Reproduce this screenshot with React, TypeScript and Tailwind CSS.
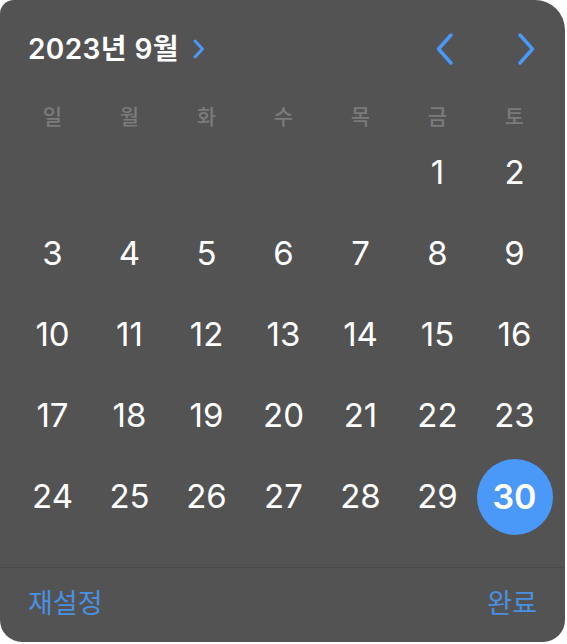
import React from "react";

const weekdays = ["일", "월", "화", "수", "목", "금", "토"];

export default function App() {
  const cells: (number | null)[] = [null, null, null, null, null];
  for (let i = 1; i <= 30; i++) cells.push(i);
  return (
    <div className="min-h-screen bg-white" style={{ fontFamily: "Inter, 'Noto Sans CJK KR', sans-serif" }}>
      <div className="w-[565px] h-[642px] bg-[#535353] rounded-tl-[14px] rounded-tr-[30px] rounded-b-[22px] overflow-hidden flex flex-col pt-[30px]">
        <div className="h-[38px] flex items-center pl-[28px] pr-[28px]">
          <span className="text-white text-[28px] font-semibold tracking-[0.4px]">2023년 9월</span>
          <svg className="ml-[13px]" width="14" height="20" viewBox="0 0 14 20">
            <path d="M3 2 L10.5 10 L3 18" fill="none" stroke="#4a98f7" strokeWidth="3" strokeLinecap="round" strokeLinejoin="round" />
          </svg>
          <div className="flex-1" />
          <svg width="20" height="34" viewBox="0 0 20 34">
            <path d="M16 3 L3.5 17 L16 31" fill="none" stroke="#4a98f7" strokeWidth="3.5" strokeLinecap="round" strokeLinejoin="round" />
          </svg>
          <svg className="ml-[62px]" width="20" height="34" viewBox="0 0 20 34">
            <path d="M3 3 L15.5 17 L3 31" fill="none" stroke="#4a98f7" strokeWidth="3.5" strokeLinecap="round" strokeLinejoin="round" />
          </svg>
        </div>
        <div className="mt-[33px] h-[24px] ml-[14px] w-[539px] grid grid-cols-7">
          {weekdays.map((w) => (
            <div key={w} className="flex items-center justify-center text-[21px] text-[#7b7b7b] font-medium">{w}</div>
          ))}
        </div>
        <div className="mt-[7px] ml-[14px] w-[539px] grid grid-cols-7 auto-rows-[81px]">
          {cells.map((d, i) => (
            <div key={i} className="flex items-center justify-center">
              {d === 30 ? (
                <div className="w-[76px] h-[76px] rounded-full bg-[#4a98f7] flex items-center justify-center text-white text-[34px] font-semibold">30</div>
              ) : d ? (
                <span className="text-white text-[33px] font-normal">{d}</span>
              ) : null}
            </div>
          ))}
        </div>
        <div className="mt-[30px] h-px bg-[#4a4a4a]" />
        <div className="h-[72px] flex items-center justify-between pl-[28px] pr-[28px]">
          <span className="text-[#4a90e2] text-[27px]">재설정</span>
          <span className="text-[#4a90e2] text-[27px]">완료</span>
        </div>
      </div>
    </div>
  );
}
